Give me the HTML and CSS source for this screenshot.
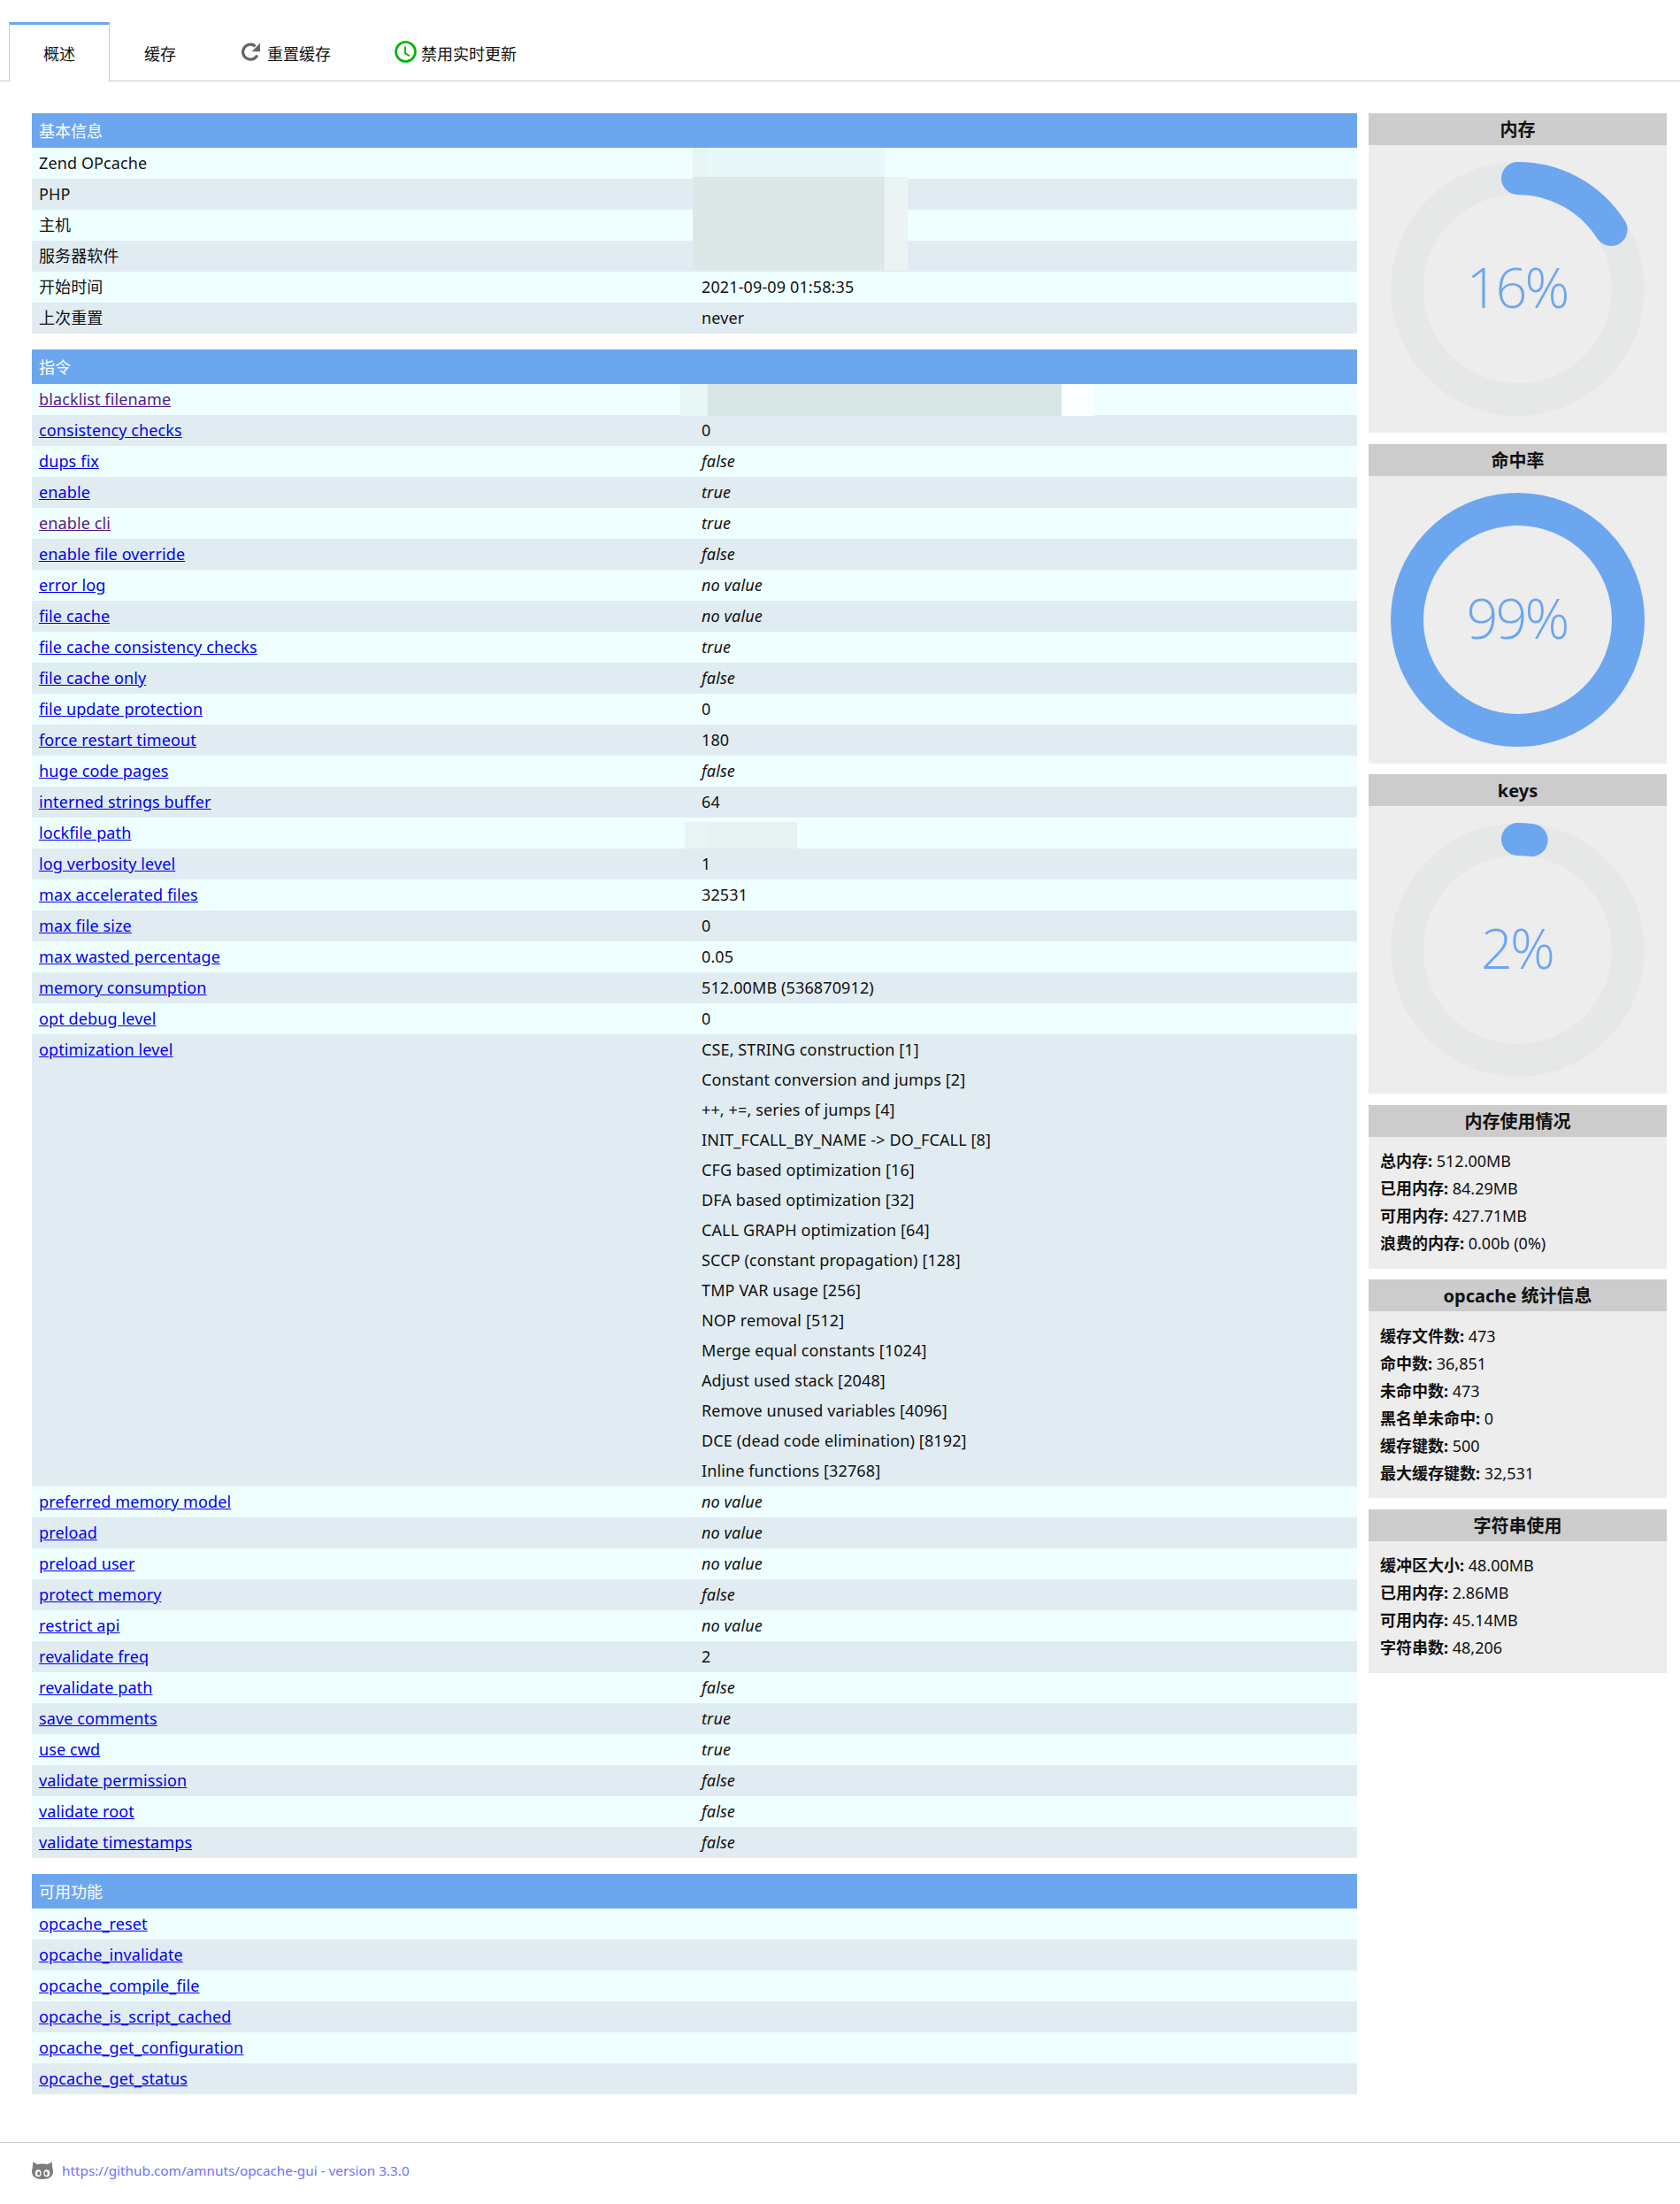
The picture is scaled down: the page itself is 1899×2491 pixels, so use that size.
FILE: index.html
```html
<!DOCTYPE html>
<html lang="zh">
<head>
<meta charset="utf-8">
<title>opcache-gui</title>
<link rel="stylesheet" href="styles.css">
</head>
<body>
<nav class="tabs">
  <a class="tab tab-active">概述</a>
  <a class="tab">缓存</a>
  <a class="tab tab-reset">
    <svg class="icon-reset" viewBox="0 0 22 22"><path d="M17.700 14.500A8.500 8.500 0 1 1 15.600 4.200" fill="none" stroke="#666" stroke-width="3.200"/><path d="M21 .8v9.400h-9.400z" fill="#666"/></svg>
    重置缓存</a>
  <a class="tab tab-live">
    <svg class="icon-clock" viewBox="0 0 25 25"><circle cx="12.500" cy="12.500" r="11" fill="none" stroke="#00b400" stroke-width="2.600"/><path d="M12 6.500v7.800l5 3" fill="none" stroke="#00b400" stroke-width="1.900"/></svg>
    禁用实时更新</a>
</nav>
<main class="layout">
  <div class="tables">
    <table class="section">
      <tr><th colspan="2">基本信息</th></tr>
      <tr><td>Zend OPcache</td><td class="val"><span class="mask m1"></span><span class="mask m1a"></span></td></tr>
      <tr><td>PHP</td><td class="val"><span class="mask m2"></span><span class="mask m2b"></span></td></tr>
      <tr><td>主机</td><td></td></tr>
      <tr><td>服务器软件</td><td></td></tr>
      <tr><td>开始时间</td><td>2021-09-09 01:58:35</td></tr>
      <tr><td>上次重置</td><td>never</td></tr>
    </table>
    <table class="section">
      <tr><th colspan="2">指令</th></tr>
      <tr><td><a class="seen">blacklist filename</a></td><td class="val"><span class="mask m3a"></span><span class="mask m3"></span><span class="mask m3c"></span></td></tr>
      <tr><td><a>consistency checks</a></td><td>0</td></tr>
      <tr><td><a>dups fix</a></td><td><i>false</i></td></tr>
      <tr><td><a>enable</a></td><td><i>true</i></td></tr>
      <tr><td><a class="seen">enable cli</a></td><td><i>true</i></td></tr>
      <tr><td><a>enable file override</a></td><td><i>false</i></td></tr>
      <tr><td><a>error log</a></td><td><i>no value</i></td></tr>
      <tr><td><a>file cache</a></td><td><i>no value</i></td></tr>
      <tr><td><a>file cache consistency checks</a></td><td><i>true</i></td></tr>
      <tr><td><a>file cache only</a></td><td><i>false</i></td></tr>
      <tr><td><a>file update protection</a></td><td>0</td></tr>
      <tr><td><a>force restart timeout</a></td><td>180</td></tr>
      <tr><td><a>huge code pages</a></td><td><i>false</i></td></tr>
      <tr><td><a>interned strings buffer</a></td><td>64</td></tr>
      <tr><td><a>lockfile path</a></td><td class="val"><span class="mask m4a"></span><span class="mask m4"></span></td></tr>
      <tr><td><a>log verbosity level</a></td><td>1</td></tr>
      <tr><td><a>max accelerated files</a></td><td>32531</td></tr>
      <tr><td><a>max file size</a></td><td>0</td></tr>
      <tr><td><a>max wasted percentage</a></td><td>0.05</td></tr>
      <tr><td><a>memory consumption</a></td><td>512.00MB (536870912)</td></tr>
      <tr><td><a>opt debug level</a></td><td>0</td></tr>
      <tr><td><a>optimization level</a></td><td>
        <div>CSE, STRING construction [1]</div>
        <div>Constant conversion and jumps [2]</div>
        <div>++, +=, series of jumps [4]</div>
        <div>INIT_FCALL_BY_NAME -&gt; DO_FCALL [8]</div>
        <div>CFG based optimization [16]</div>
        <div>DFA based optimization [32]</div>
        <div>CALL GRAPH optimization [64]</div>
        <div>SCCP (constant propagation) [128]</div>
        <div>TMP VAR usage [256]</div>
        <div>NOP removal [512]</div>
        <div>Merge equal constants [1024]</div>
        <div>Adjust used stack [2048]</div>
        <div>Remove unused variables [4096]</div>
        <div>DCE (dead code elimination) [8192]</div>
        <div>Inline functions [32768]</div>
      </td></tr>
      <tr><td><a>preferred memory model</a></td><td><i>no value</i></td></tr>
      <tr><td><a>preload</a></td><td><i>no value</i></td></tr>
      <tr><td><a>preload user</a></td><td><i>no value</i></td></tr>
      <tr><td><a>protect memory</a></td><td><i>false</i></td></tr>
      <tr><td><a>restrict api</a></td><td><i>no value</i></td></tr>
      <tr><td><a>revalidate freq</a></td><td>2</td></tr>
      <tr><td><a>revalidate path</a></td><td><i>false</i></td></tr>
      <tr><td><a>save comments</a></td><td><i>true</i></td></tr>
      <tr><td><a>use cwd</a></td><td><i>true</i></td></tr>
      <tr><td><a>validate permission</a></td><td><i>false</i></td></tr>
      <tr><td><a>validate root</a></td><td><i>false</i></td></tr>
      <tr><td><a>validate timestamps</a></td><td><i>false</i></td></tr>
    </table>
    <table class="section">
      <tr><th colspan="2">可用功能</th></tr>
      <tr><td colspan="2"><a>opcache_reset</a></td></tr>
      <tr><td colspan="2"><a>opcache_invalidate</a></td></tr>
      <tr><td colspan="2"><a>opcache_compile_file</a></td></tr>
      <tr><td colspan="2"><a>opcache_is_script_cached</a></td></tr>
      <tr><td colspan="2"><a>opcache_get_configuration</a></td></tr>
      <tr><td colspan="2"><a>opcache_get_status</a></td></tr>
    </table>
  </div>
  <aside class="side">
    <section class="card">
      <h3>内存</h3>
      <div class="gauge">
        <svg viewBox="0 0 337 325"><circle class="track" cx="168.500" cy="162.500" r="125"/><circle class="fill" cx="168.500" cy="162.500" r="125" pathLength="100" stroke-dasharray="16 100" transform="rotate(-90 168.500 162.500)"/></svg>
        <span class="pct">16%</span>
      </div>
    </section>
    <section class="card">
      <h3>命中率</h3>
      <div class="gauge">
        <svg viewBox="0 0 337 325"><circle class="track" cx="168.500" cy="162.500" r="125"/><circle class="fill" cx="168.500" cy="162.500" r="125" pathLength="100" stroke-dasharray="99 100" transform="rotate(-90 168.500 162.500)"/></svg>
        <span class="pct">99%</span>
      </div>
    </section>
    <section class="card">
      <h3>keys</h3>
      <div class="gauge">
        <svg viewBox="0 0 337 325"><circle class="track" cx="168.500" cy="162.500" r="125"/><circle class="fill" cx="168.500" cy="162.500" r="125" pathLength="100" stroke-dasharray="2 100" transform="rotate(-90 168.500 162.500)"/></svg>
        <span class="pct">2%</span>
      </div>
    </section>
    <section class="card">
      <h3>内存使用情况</h3>
      <div class="stats">
        <p><b>总内存:</b> 512.00MB</p>
        <p><b>已用内存:</b> 84.29MB</p>
        <p><b>可用内存:</b> 427.71MB</p>
        <p><b>浪费的内存:</b> 0.00b (0%)</p>
      </div>
    </section>
    <section class="card">
      <h3>opcache 统计信息</h3>
      <div class="stats">
        <p><b>缓存文件数:</b> 473</p>
        <p><b>命中数:</b> 36,851</p>
        <p><b>未命中数:</b> 473</p>
        <p><b>黑名单未命中:</b> 0</p>
        <p><b>缓存键数:</b> 500</p>
        <p><b>最大缓存键数:</b> 32,531</p>
      </div>
    </section>
    <section class="card">
      <h3>字符串使用</h3>
      <div class="stats">
        <p><b>缓冲区大小:</b> 48.00MB</p>
        <p><b>已用内存:</b> 2.86MB</p>
        <p><b>可用内存:</b> 45.14MB</p>
        <p><b>字符串数:</b> 48,206</p>
      </div>
    </section>
  </aside>
</main>
<footer class="footer">
  <svg class="octo" viewBox="0 0 24 20"><path d="M1.200 .6 6.400 3.200C8 2.700 9.800 2.500 12 2.500s4 .2 5.600.7L22.800.6l.4 6.400c.5 1.200.8 2.600.8 4.100 0 6.400-4.800 8.900-12 8.900S0 17.500 0 11.100c0-1.500.3-2.900.8-4.100z" fill="#7c7c7c"/><ellipse cx="7.200" cy="13.200" rx="3.400" ry="4" fill="#fff"/><ellipse cx="16.800" cy="13.200" rx="3.400" ry="4" fill="#fff"/><ellipse cx="7.800" cy="13.500" rx="1.500" ry="2.200" fill="#777"/><ellipse cx="16.200" cy="13.500" rx="1.500" ry="2.200" fill="#777"/></svg>
  <a class="repo">https://github.com/amnuts/opcache-gui - version 3.3.0</a>
</footer>
</body>
</html>
```
FILE: styles.css
```css
* { box-sizing: border-box; }
html, body { margin: 0; padding: 0; }
body {
  background: #fff;
  color: #111;
  font-family: "Noto Sans", "Noto Sans CJK SC", sans-serif;
  font-size: 18px;
}
.tabs {
  display: flex;
  height: 92px;
  padding: 25px 0 0 10px;
  border-bottom: 1px solid #ccc;
}
.tab {
  display: flex;
  align-items: center;
  height: 67px;
  padding: 3px 39px 0;
  color: #111;
}
.tab-active {
  background: #fff;
  border: 1px solid #ccc;
  border-top: 3px solid #6ca6ef;
  border-bottom: 0;
  padding: 0 38px;
}
.tab-reset { padding-left: 35px; gap: 7px; }
.tab-live { padding-left: 33px; gap: 5px; }
.icon-reset { width: 22px; height: 22px; margin-top: -3px; }
.icon-clock { width: 25px; height: 25px; margin-top: -3px; }
.layout {
  display: flex;
  align-items: flex-start;
  gap: 13px;
  padding: 36px 15px 0 36px;
}
.tables { flex: 0 0 1498px; }
.section {
  width: 100%;
  table-layout: fixed;
  border-collapse: collapse;
  margin-bottom: 18px;
}
.section th {
  height: 39px;
  padding: 0 8px 2px;
  background: #6ca6ef;
  color: #fff;
  font-weight: 400;
  text-align: left;
}
.section td {
  padding: 0 8px 1px;
  line-height: 34px;
  letter-spacing: .12px;
  vertical-align: top;
}
.section tr:nth-child(even) { background: #efffff; }
.section tr:nth-child(odd) { background: #e0ecf1; }
.section a { color: #00e; text-decoration: underline; }
.section a.seen { color: #551a8b; }
.val { position: relative; }
.mask { position: absolute; display: block; }
.m1 { left: 15px; top: 0; width: 200px; height: 33px; background: #e8f8f8; }
.m1a { left: -2px; top: 0; width: 17px; height: 33px; background: #e8f4f4; }
.m2 { left: -2px; top: -2px; width: 217px; height: 105px; background: #dce8e8; z-index: 1; }
.m2b { left: 215px; top: -2px; width: 26px; height: 105px; background: #ebf3f3; z-index: 1; }
.m3a { left: -16px; top: 0; width: 31px; height: 36px; background: #e8f6f6; }
.m3 { left: 15px; top: 0; width: 400px; height: 36px; background: #d8e5e5; }
.m3c { left: 415px; top: 0; width: 37px; height: 36px; background: #fbfefe; }
.m4a { left: -11px; top: 5px; width: 27px; height: 30px; background: #e9f3f3; }
.m4 { left: 16px; top: 5px; width: 100px; height: 30px; background: #e6f2f2; }
.side { flex: 0 0 337px; display: flex; flex-direction: column; gap: 12.500px; }
.card { background: #ededed; }
.card h3 {
  margin: 0;
  height: 36px;
  background: #ccc;
  color: #111;
  font-size: 20px;
  font-weight: 700;
  line-height: 38px;
  text-align: center;
}
.gauge { position: relative; height: 325px; }
.gauge svg { display: block; width: 337px; height: 325px; }
.track { fill: none; stroke: #e6e8e7; stroke-width: 37; }
.fill { fill: none; stroke: #6ca6ef; stroke-width: 37; stroke-linecap: round; }
.pct {
  position: absolute;
  left: 0;
  right: 0;
  top: 0;
  height: 325px;
  padding-right: 2px;
  color: #6ca6ef;
  font-family: "Open Sans", sans-serif;
  font-size: 63px;
  font-weight: 300;
  letter-spacing: -3px;
  line-height: 319px;
  text-align: center;
}
.stats { padding: 12.500px 13px; }
.stats p { margin: 0; line-height: 31px; }
.footer {
  display: flex;
  align-items: center;
  gap: 10px;
  margin-top: 36px;
  height: 64px;
  padding-left: 36px;
  padding-bottom: 2px;
  border-top: 1px solid #ccc;
}
.octo { width: 24px; height: 20px; }
.repo { color: #6f6fff; font-size: 15.300px; }
```
